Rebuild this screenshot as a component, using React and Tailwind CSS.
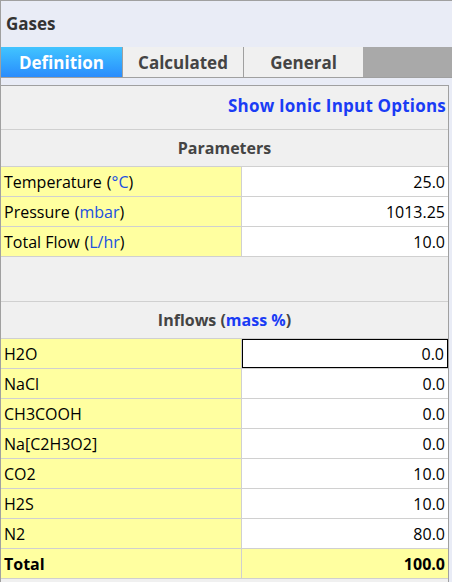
const params = [
  { label: 'Temperature', unit: '°C', value: '25.0' },
  { label: 'Pressure', unit: 'mbar', value: '1013.25' },
  { label: 'Total Flow', unit: 'L/hr', value: '10.0' },
];

const inflows = [
  { label: 'H2O', value: '0.0', focused: true },
  { label: 'NaCl', value: '0.0' },
  { label: 'CH3COOH', value: '0.0' },
  { label: 'Na[C2H3O2]', value: '0.0' },
  { label: 'CO2', value: '10.0' },
  { label: 'H2S', value: '10.0' },
  { label: 'N2', value: '80.0' },
];

const Row = ({ label, unit, value, focused, bold }) => (
  <div className="flex h-[30px] border-b border-[#d0d0d0]">
    <div
      className={`w-[241px] bg-[#ffffa0] border-r border-[#d0d0d0] flex items-center pl-[3px] text-[16px] text-black ${bold ? 'font-bold' : ''}`}
    >
      {label}
      {unit && (
        <span className="ml-[5px]">
          (<span className="text-[#2050e0]">{unit}</span>)
        </span>
      )}
    </div>
    <div
      className={`flex-1 flex items-center justify-end pr-[3px] text-[16px] text-black ${bold ? 'bg-[#ffffa0] font-bold' : 'bg-white'} ${focused ? 'border border-black' : ''}`}
    >
      {value}
    </div>
  </div>
);

const SectionHeader = ({ children }) => (
  <div className="h-[37px] border-b border-[#d0d0d0] flex items-center justify-center text-[16px] font-bold text-[#444]">
    {children}
  </div>
);

export default function App() {
  return (
    <div
      className="w-[452px] h-[582px] bg-[#e9ecf6] border-t border-l border-[#a0a0a0] flex flex-col overflow-hidden"
      style={{ fontFamily: '"Open Sans", "Noto Sans", sans-serif' }}
    >
      <div className="h-[46px] flex items-center pl-[5px] text-[17px] font-bold text-[#333]">
        Gases
      </div>

      <div className="flex h-[31px] border-b border-[#a0a0a0]">
        <div className="w-[121px] bg-gradient-to-b from-[#42c4ff] to-[#2b8cfc] flex items-center justify-center pt-[2px] text-white font-bold text-[17px]">
          Definition
        </div>
        <div className="w-[121px] border-l border-[#a0a0a0] bg-[#f0f0f0] flex items-center justify-center pt-[2px] text-[#444] font-bold text-[17px]">
          Calculated
        </div>
        <div className="w-[120px] border-l border-[#a0a0a0] bg-[#f0f0f0] flex items-center justify-center pt-[2px] text-[#444] font-bold text-[17px]">
          General
        </div>
        <div className="flex-1 bg-[#a9a9a9]" />
      </div>

      <div className="h-[7px]" />

      <div className="flex-1 mr-[3px] bg-[#f0f0f0] border-t border-r border-[#a0a0a0] flex flex-col">
        <div className="h-[44px] border-b border-[#d0d0d0] flex items-center justify-end pr-[2px] pb-[4px] text-[17px] font-bold text-[#1a3cf5] tracking-[0.2px]">
          Show Ionic Input Options
        </div>

        <SectionHeader>Parameters</SectionHeader>
        {params.map((p) => (
          <Row key={p.label} {...p} />
        ))}

        <div className="h-[45px] border-b border-[#d0d0d0]" />

        <SectionHeader>
          Inflows&nbsp;(<span className="text-[#1a3cf5]">mass %</span>)
        </SectionHeader>
        {inflows.map((p) => (
          <Row key={p.label} {...p} />
        ))}
        <Row label="Total" value="100.0" bold />
      </div>
    </div>
  );
}
